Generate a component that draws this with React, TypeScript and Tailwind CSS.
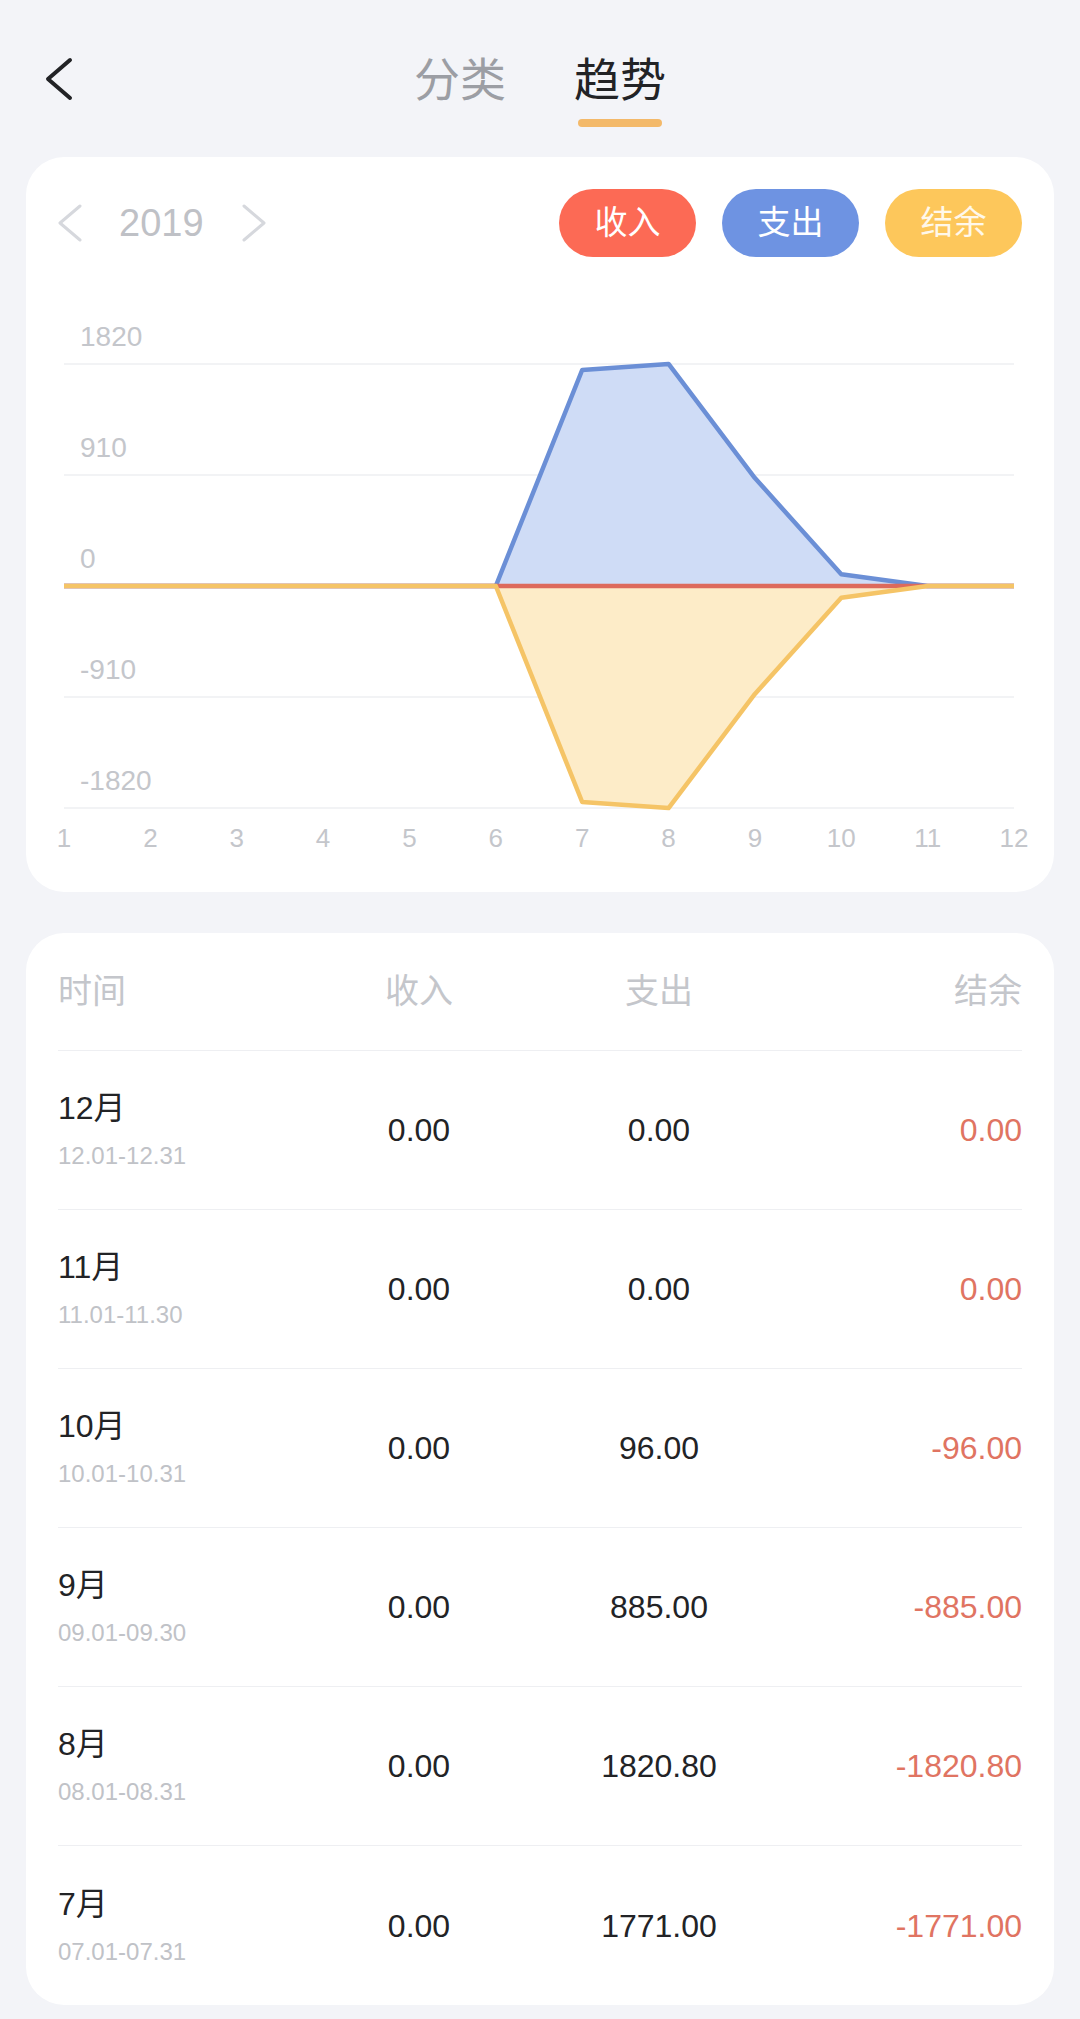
import React from "react";

const FONT = { fontFamily: '"Liberation Sans", "Noto Sans CJK SC", sans-serif' };

const expense = [0, 0, 0, 0, 0, 0, 1771, 1820.8, 885, 96, 0, 0];
const xs = (i: number) => 38 + (i * 950) / 11;
const ys = (v: number) => 286 - (v * 222) / 1820;

function Chart() {
  const blueLine = expense.map((v, i) => `${xs(i)},${ys(v)}`).join(" ");
  const yellowLine = expense.map((v, i) => `${xs(i)},${ys(-v)}`).join(" ");
  const blueArea = `${blueLine} ${xs(11)},${ys(0)} ${xs(0)},${ys(0)}`;
  const yellowArea = `${yellowLine} ${xs(11)},${ys(0)} ${xs(0)},${ys(0)}`;
  const grid = [1820, 910, 0, -910, -1820];
  const labels = ["1820", "910", "0", "-910", "-1820"];
  return (
    <svg width="1028" height="560" viewBox="0 0 1028 560" className="block" style={FONT}>
      {grid.map((g) => (
        <line key={g} x1={38} x2={988} y1={ys(g)} y2={ys(g)} stroke="#eeeff2" strokeWidth={1.5} />
      ))}
      {labels.map((l, i) => (
        <text key={l} x={54} y={ys(grid[i]) - 28 + 10} fontSize={28} fill="#c4c6cb">
          {l}
        </text>
      ))}
      <polygon points={blueArea} fill="#cfdcf6" />
      <polygon points={yellowArea} fill="#fdecc8" />
      <polyline points={blueLine} fill="none" stroke="#6b8fd6" strokeWidth={4.5} strokeLinejoin="round" />
      <line x1={xs(0)} x2={xs(11)} y1={ys(0)} y2={ys(0)} stroke="#dd6a5c" strokeWidth={4.5} />
      <polyline points={yellowLine} fill="none" stroke="#f5c466" strokeWidth={4.5} strokeLinejoin="round" />
      {Array.from({ length: 12 }, (_, i) => (
        <text key={i} x={xs(i)} y={547} fontSize={26} fill="#c4c6cb" textAnchor="middle">
          {i + 1}
        </text>
      ))}
    </svg>
  );
}

const rows = [
  { m: "12月", d: "12.01-12.31", inc: "0.00", exp: "0.00", bal: "0.00" },
  { m: "11月", d: "11.01-11.30", inc: "0.00", exp: "0.00", bal: "0.00" },
  { m: "10月", d: "10.01-10.31", inc: "0.00", exp: "96.00", bal: "-96.00" },
  { m: "9月", d: "09.01-09.30", inc: "0.00", exp: "885.00", bal: "-885.00" },
  { m: "8月", d: "08.01-08.31", inc: "0.00", exp: "1820.80", bal: "-1820.80" },
  { m: "7月", d: "07.01-07.31", inc: "0.00", exp: "1771.00", bal: "-1771.00" },
];

export default function App() {
  return (
    <div className="min-h-[2019px] w-[1080px] bg-[#f3f4f8] px-[26px] pb-[15px]" style={FONT}>
      {/* Header */}
      <div className="grid h-[157px] grid-cols-[1fr_auto_1fr]">
        <div className="pl-[18px] pt-[55px]">
          <svg width="32" height="48" viewBox="0 0 32 48">
            <path d="M26 5 L4 24 L26 43" fill="none" stroke="#222326" strokeWidth="4" strokeLinecap="round" strokeLinejoin="round" />
          </svg>
        </div>
        <div className="flex gap-[68px] pt-[52px]">
          <div className="flex flex-col items-center">
            <span className="text-[46px] leading-[56px] text-[#9c9ea4]">分类</span>
          </div>
          <div className="flex flex-col items-center">
            <span className="text-[46px] leading-[56px] text-[#222326]">趋势</span>
            <div className="mt-[11px] h-[8px] w-[84px] rounded-full bg-[#f3b96a]" />
          </div>
        </div>
        <div />
      </div>

      {/* Chart card */}
      <div className="rounded-[38px] bg-white pb-[32px] pt-[32px]">
        <div className="flex h-[68px] items-center justify-between px-[32px]">
          <div className="flex items-center gap-[37px]">
            <svg width="24" height="38" viewBox="0 0 24 38">
              <path d="M22 2 L2 19 L22 36" fill="none" stroke="#d6d8dd" strokeWidth="3" strokeLinecap="round" strokeLinejoin="round" />
            </svg>
            <span className="text-[38px] leading-none text-[#bfc1c6]">2019</span>
            <svg width="26" height="38" viewBox="0 0 26 38">
              <path d="M3 2 L23 19 L3 36" fill="none" stroke="#d6d8dd" strokeWidth="3" strokeLinecap="round" strokeLinejoin="round" />
            </svg>
          </div>
          <div className="flex gap-[26px]">
            <div className="flex h-[68px] w-[137px] items-center justify-center rounded-full bg-[#fc6a55] text-[33px] text-white">收入</div>
            <div className="flex h-[68px] w-[137px] items-center justify-center rounded-full bg-[#6e93e2] text-[33px] text-white">支出</div>
            <div className="flex h-[68px] w-[137px] items-center justify-center rounded-full bg-[#fdc75b] text-[33px] text-[#fff8ea]">结余</div>
          </div>
        </div>
        <div className="mt-[43px]">
          <Chart />
        </div>
      </div>

      {/* Table card */}
      <div className="mt-[41px] rounded-[38px] bg-white px-[32px]">
        <div className="grid h-[118px] grid-cols-[241px_240px_240px_1fr] items-center border-b-[1.5px] border-[#eeeff2] text-[34px] text-[#c4c6cb]">
          <span>时间</span>
          <span className="text-center">收入</span>
          <span className="text-center">支出</span>
          <span className="text-right">结余</span>
        </div>
        {rows.map((r, i) => (
          <div
            key={r.m}
            className={`grid h-[159px] grid-cols-[241px_240px_240px_1fr] items-center ${i < rows.length - 1 ? "border-b-[1.5px] border-[#eeeff2]" : ""}`}
          >
            <div className="flex flex-col">
              <span className="text-[32px] leading-[40px] text-[#222326]">{r.m}</span>
              <span className="mt-[12px] text-[24px] leading-[32px] text-[#c0c2c7]">{r.d}</span>
            </div>
            <span className="text-center text-[32px] text-[#222326]">{r.inc}</span>
            <span className="text-center text-[32px] text-[#222326]">{r.exp}</span>
            <span className="text-right text-[32px] text-[#e07462]">{r.bal}</span>
          </div>
        ))}
      </div>
    </div>
  );
}
